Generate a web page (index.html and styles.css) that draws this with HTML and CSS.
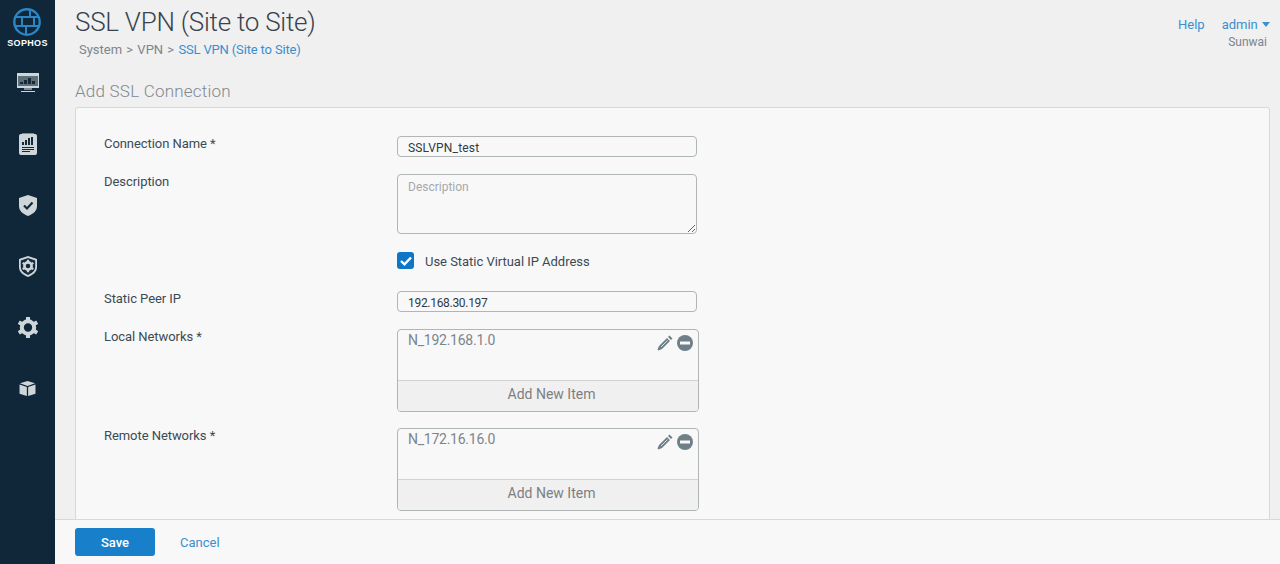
FILE: index.html
```html
<!DOCTYPE html>
<html lang="en">
<head>
<meta charset="utf-8">
<title>SSL VPN (Site to Site)</title>
<link rel="stylesheet" href="styles.css">
</head>
<body>
<nav class="sidebar">
  <div class="brand">
    <svg class="logo" width="28" height="28" viewBox="0 0 28 28" fill="none" stroke="#2b86c5">
      <circle cx="14" cy="14" r="12.700" stroke-width="2.400"/>
      <path d="M3 9H25M2 18H26M17 2V9M9 9V18M21 9V18M13 18V26" stroke-width="2"/>
    </svg>
    <span class="brand-name">SOPHOS</span>
  </div>
  <a class="nav-item" href="#"><svg width="22" height="20" viewBox="0 0 22 20"><path fill="#cfd6d9" d="M0 0H22V15H0Z"/><path fill="#5f6f78" d="M1 3H21V13H1Z"/><path fill="#14293a" d="M3 9H6V11H3ZM7 7H10V11H7ZM11 5H14V11H11ZM15 8H18V11H15Z"/><path fill="#7d8b92" d="M7 15H15V17H7Z"/><path fill="#cfd6d9" d="M4 18H18V19H4Z"/></svg></a>
  <a class="nav-item" href="#"><svg width="18" height="22" viewBox="0 0 18 22"><path fill="#7d8b92" d="M3 0H15V2H3Z"/><path fill="#cfd6d9" d="M2 1H16A2 2 0 0 1 18 3V20A2 2 0 0 1 16 22H2A2 2 0 0 1 0 20V3A2 2 0 0 1 2 1Z"/><path fill="#14293a" d="M3 9H5V12H3ZM6 7H8V12H6ZM9 5H11V12H9ZM12 4H14V12H12ZM3 14H15V15H3ZM3 16H15V17H3ZM3 18H11V19H3Z"/></svg></a>
  <a class="nav-item" href="#"><svg width="18" height="21" viewBox="0 0 18 21"><path fill="#cfd6d9" d="M9 0L18 3V11C18 16 14 19 9 21C4 19 0 16 0 11V3Z"/><path fill="none" stroke="#14293a" stroke-width="2.200" d="M5 10.500L8 13.500L13.500 7.500"/></svg></a>
  <a class="nav-item" href="#"><svg width="18" height="21" viewBox="0 0 18 21"><path fill="#cfd6d9" d="M9 0L18 3V11C18 16 14 19 9 21C4 19 0 16 0 11V3Z"/><path fill="#14293a" d="M9 2L16.200 4.500V11C16.200 14.800 13 17.200 9 19C5 17.200 1.800 14.800 1.800 11V4.500Z"/><circle cx="9" cy="10" r="3.600" fill="none" stroke="#cfd6d9" stroke-width="2.600"/><path stroke="#cfd6d9" stroke-width="2.200" d="M9 3.800V6M9 14V16.200M3.600 6.900L5.600 8M12.400 12L14.400 13.100M3.600 13.100L5.600 12M12.400 8L14.400 6.900"/></svg></a>
  <a class="nav-item" href="#"><svg width="20" height="21" viewBox="0 0 20 21"><circle cx="10" cy="10.500" r="6.200" fill="none" stroke="#cfd6d9" stroke-width="4"/><path stroke="#cfd6d9" stroke-width="4" d="M10 0V4M10 17V21M.8 5.200L4.300 7.200M15.700 13.800L19.200 15.800M.8 15.800L4.300 13.800M15.700 7.200L19.200 5.200"/></svg></a>
  <a class="nav-item" href="#"><svg width="17" height="15" viewBox="0 0 18 16"><path fill="#cfd6d9" d="M9 0L17 2.500L9 5.300L1 2.500ZM.5 3.700L8.300 6.500V16L.5 13.500ZM17.500 3.700L9.700 6.500V16L17.500 13.500Z"/></svg></a>
</nav>
<div class="main">
  <header class="top">
    <div class="heading">
      <h1 class="title">SSL VPN (Site to Site)</h1>
      <div class="crumbs">System &gt; VPN &gt; <a href="#">SSL VPN (Site to Site)</a></div>
    </div>
    <div class="user">
      <div class="user-links"><a href="#">Help</a><a href="#">admin <span class="caret"></span></a></div>
      <div class="tenant">Sunwai</div>
    </div>
  </header>
  <div class="content">
    <h2 class="section">Add SSL Connection</h2>
    <section class="panel">
      <div class="row row-name">
        <label class="label">Connection Name *</label>
        <input class="field field-name" type="text" value="SSLVPN_test">
      </div>
      <div class="row row-desc">
        <label class="label">Description</label>
        <textarea class="field area" placeholder="Description"></textarea>
      </div>
      <div class="row row-check">
        <span class="label"></span>
        <span class="check"><svg width="12" height="10" viewBox="0 0 12 10"><path fill="none" stroke="#fff" stroke-width="2.400" d="M1 5L4.500 8.300L11 1.500"/></svg></span>
        <span class="check-text">Use Static Virtual IP Address</span>
      </div>
      <div class="row row-peer">
        <label class="label">Static Peer IP</label>
        <input class="field field-ip" type="text" value="192.168.30.197">
      </div>
      <div class="row row-list">
        <label class="label">Local Networks *</label>
        <div class="list">
          <div class="list-body">
            <span class="list-name">N_192.168.1.0</span>
            <span class="list-icons">
              <svg width="16" height="16" viewBox="0 0 16 16"><path fill="#6f7f88" d="M12.500 .5L15.500 3.500L14 5L11 2ZM10 3L13 6L5 14L1.500 15.500L0.500 14.500L2 11Z"/><path stroke="#f8f8f8" stroke-width=".8" d="M10.500 5.500L4 12"/></svg>
              <svg width="16" height="16" viewBox="0 0 16 16"><circle cx="8" cy="8" r="8" fill="#6f7f88"/><path fill="#f8f8f8" d="M3 6.500H13V9.500H3Z"/></svg>
            </span>
          </div>
          <div class="list-add">Add New Item</div>
        </div>
      </div>
      <div class="row row-list">
        <label class="label">Remote Networks *</label>
        <div class="list">
          <div class="list-body">
            <span class="list-name">N_172.16.16.0</span>
            <span class="list-icons">
              <svg width="16" height="16" viewBox="0 0 16 16"><path fill="#6f7f88" d="M12.500 .5L15.500 3.500L14 5L11 2ZM10 3L13 6L5 14L1.500 15.500L0.500 14.500L2 11Z"/><path stroke="#f8f8f8" stroke-width=".8" d="M10.500 5.500L4 12"/></svg>
              <svg width="16" height="16" viewBox="0 0 16 16"><circle cx="8" cy="8" r="8" fill="#6f7f88"/><path fill="#f8f8f8" d="M3 6.500H13V9.500H3Z"/></svg>
            </span>
          </div>
          <div class="list-add">Add New Item</div>
        </div>
      </div>
    </section>
  </div>
  <footer class="actions">
    <button class="save" type="button">Save</button>
    <a class="cancel" href="#">Cancel</a>
  </footer>
</div>
</body>
</html>
```
FILE: styles.css
```css
* { box-sizing: border-box; }
html, body { height: 100%; }
body {
  margin: 0;
  display: flex;
  overflow: hidden;
  background: #f0f0f0;
  font-family: Roboto, "Liberation Sans", sans-serif;
  font-size: 13px;
  color: #3c4a54;
}
a { color: #3a8fd0; text-decoration: none; }

.sidebar {
  width: 55px;
  flex: none;
  background: #10273a;
  display: flex;
  flex-direction: column;
  align-items: center;
}
.brand { display: flex; flex-direction: column; align-items: center; padding-top: 8px; height: 52.5px; }
.logo { display: block; }
.brand-name { font: 700 9px/9px "Liberation Sans", sans-serif; color: #fff; margin-top: 3px; letter-spacing: .35px; }
.nav-item { height: 61px; display: flex; align-items: center; justify-content: center; width: 100%; }
.nav-item svg { display: block; }

.main { flex: 1; min-width: 0; display: flex; flex-direction: column; }
.top { height: 76px; flex: none; display: flex; justify-content: space-between; padding: 0 10px 0 20px; }
.title { margin: 6px 0 0; font-size: 26px; line-height: 32px; font-weight: 300; letter-spacing: -.25px; color: #37434d; }
.crumbs { margin: 4px 0 0 4px; font-size: 13px; line-height: 16px; word-spacing: 1px; color: #7c858c; }
.crumbs a { word-spacing: 0; letter-spacing: -.15px; }
.user { padding-top: 17px; text-align: right; font-size: 13px; }
.user-links { display: flex; gap: 17px; line-height: 16px; }
.caret { display: inline-block; border: 4.5px solid transparent; border-top: 5px solid #3a8fd0; border-bottom: 0; margin-left: 1px; vertical-align: 2px; }
.tenant { font-size: 12px; line-height: 14px; margin-top: 2px; padding-right: 3px; color: #7c858c; }

.content { flex: 1; min-height: 0; overflow: hidden; padding: 0 10px 0 20px; }
.section { margin: 5px 0 6px; font-size: 17px; line-height: 20px; font-weight: 300; letter-spacing: .22px; color: #7f8a92; }
.panel { background: #f8f8f8; border: 1px solid #d8d8d8; border-radius: 3px; padding: 28px 28px 20px; min-height: 500px; }

.row { display: flex; }
.label { width: 293px; flex: none; line-height: 16px; letter-spacing: -.06px; color: #3c4a54; }
.row-name { height: 38px; }
.row-desc { height: 78px; }
.row-check { height: 39px; align-items: flex-start; }
.row-peer { height: 38px; }
.row-list { height: 99px; }

.field {
  width: 300px;
  height: 21px;
  border: 1px solid #b0b5b5;
  border-radius: 4px;
  background: #f8f8f8;
  padding: 2px 10px 0;
  font: 12px Roboto, "Liberation Sans", sans-serif;
  color: #2f3b45;
}
.field-name { letter-spacing: .18px; }
.field-ip { letter-spacing: -.3px; }
.area { height: 60px; padding: 5px 10px; resize: vertical; display: block; }
.area::placeholder { color: #a6a9ab; opacity: 1; }

.check { width: 17px; height: 17px; border-radius: 3px; background: #0f75c5; display: flex; align-items: center; justify-content: center; }
.check-text { margin-left: 11px; padding-top: 1px; line-height: 17px; letter-spacing: -.03px; }

.list { width: 302px; height: 83px; border: 1px solid #b0b5b5; border-radius: 4px; display: flex; flex-direction: column; overflow: hidden; }
.list-body { flex: 1; display: flex; justify-content: space-between; padding: 2px 5px 0 10px; font-size: 14px; line-height: 16px; color: #7c858c; }
.list-name { letter-spacing: -.25px; }
.list-icons { display: flex; gap: 4px; padding-top: 3px; }
.list-add { height: 31px; flex: none; border-top: 1px solid #d2d2d2; background: #f0f0f0; text-align: center; padding-left: 7px; line-height: 27px; font-size: 14px; color: #7c7f82; }

.actions { height: 45px; flex: none; background: #f8f8f8; border-top: 1px solid #d8d8d8; display: flex; align-items: center; padding-left: 20px; gap: 25px; }
.save { width: 80px; height: 28px; border: 0; border-radius: 3px; background: #1880ca; color: #fff; font: 500 13px Roboto, "Liberation Sans", sans-serif; }
.cancel { font-size: 13px; }
```
